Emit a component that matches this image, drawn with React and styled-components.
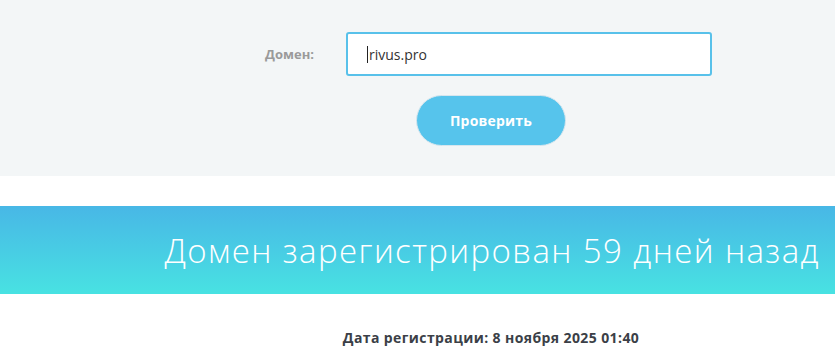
import React from 'react'
import styled, { createGlobalStyle } from 'styled-components'

const GlobalStyle = createGlobalStyle`
  html, body {
    margin: 0;
    padding: 0;
    background: #fff;
    overflow: hidden;
    font-family: 'Open Sans', 'Liberation Sans', sans-serif;
  }
`

const CheckPanel = styled.section`
  background: #f3f6f7;
  height: 176px;
  box-sizing: border-box;
  padding-top: 32px;
`

// content column is offset so its centre sits at 491px, as on the site
const Container = styled.div`
  box-sizing: border-box;
  width: 100%;
  padding-left: 147px;
`

const FormRow = styled.div`
  display: grid;
  grid-template-columns: 167px 366px;
  column-gap: 32px;
  align-items: center;
`

const Label = styled.label`
  text-align: right;
  font-size: 13px;
  font-weight: 700;
  color: #9a9a9a;
`

const DomainInput = styled.div`
  height: 44px;
  box-sizing: border-box;
  border: 2px solid #58c1ea;
  border-radius: 3px;
  background: #fff;
  display: flex;
  align-items: center;
  padding-left: 19px;
  font-size: 14px;
  color: #333;
`

const Caret = styled.span`
  display: inline-block;
  width: 1px;
  height: 17px;
  background: #222;
  margin-right: 1px;
`

const ButtonRow = styled.div`
  display: flex;
  justify-content: center;
  margin-top: 19px;
`

const CheckButton = styled.button`
  width: 150px;
  height: 51px;
  border-radius: 26px;
  border: 1px solid #d6e6ee;
  background: #56c4ec;
  color: #fff;
  font-family: 'Open Sans', 'Liberation Sans', sans-serif;
  font-weight: 700;
  font-size: 14px;
  letter-spacing: 0.2px;
  cursor: pointer;
`

const Banner = styled.section`
  margin-top: 30px;
  height: 88px;
  background: linear-gradient(180deg, #48b7e6 0%, #48e2e2 100%);
  display: flex;
  align-items: center;
  justify-content: flex-end;
  padding-right: 15px;
`

const Heading = styled.h1`
  margin: 0;
  font-weight: 300;
  font-size: 33px;
  color: #fff;
  white-space: nowrap;
  letter-spacing: 1.4px;
`

const DateLine = styled.p`
  margin: 34px 0 0;
  text-align: center;
  font-size: 14px;
  font-weight: 700;
  letter-spacing: 0.4px;
  color: #3b3f47;
`

export default function App() {
  return (
    <>
      <GlobalStyle />
      <CheckPanel>
        <Container>
          <FormRow>
            <Label>Домен:</Label>
            <DomainInput>
              <Caret />
              rivus.pro
            </DomainInput>
          </FormRow>
          <ButtonRow>
            <CheckButton>Проверить</CheckButton>
          </ButtonRow>
        </Container>
      </CheckPanel>
      <Banner>
        <Heading>Домен зарегистрирован 59 дней назад</Heading>
      </Banner>
      <Container>
        <DateLine>Дата регистрации: 8 ноября 2025 01:40</DateLine>
      </Container>
    </>
  )
}
